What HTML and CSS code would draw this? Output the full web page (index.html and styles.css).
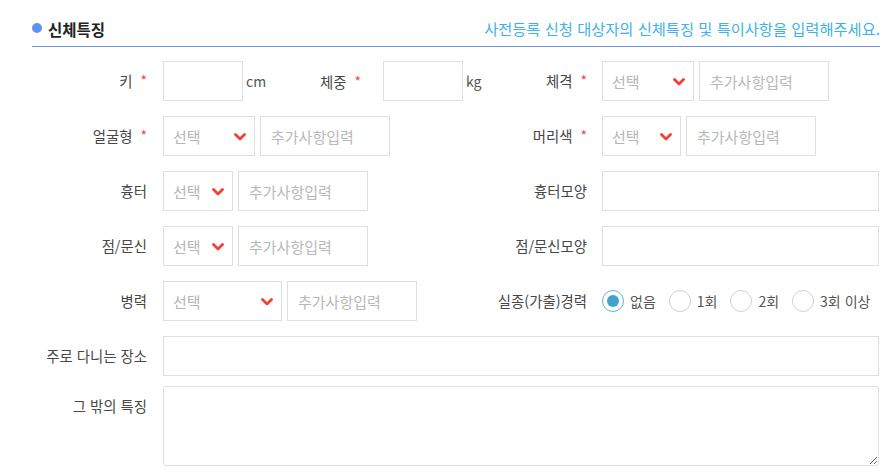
FILE: index.html
```html
<!DOCTYPE html>
<html lang="ko">
<head>
<meta charset="utf-8">
<title>신체특징</title>
<link rel="stylesheet" href="styles.css">
</head>
<body>
<section class="panel">
  <header class="head">
    <span class="dot"></span>
    <h2 class="title">신체특징</h2>
    <p class="info">사전등록 신청 대상자의 신체특징 및 특이사항을 입력해주세요.</p>
  </header>

  <div class="form">
    <div class="row">
      <div class="lab">키<span class="req">*</span></div>
      <div class="cell">
        <input class="inp w80" type="text">
        <span class="unit">cm</span>
        <span class="sublab">체중<span class="req">*</span></span>
        <input class="inp w80" type="text">
        <span class="unit">kg</span>
      </div>
      <div class="lab rlab">체격<span class="req">*</span></div>
      <div class="cell">
        <div class="sel w92"><span>선택</span><svg class="chev" viewBox="0 0 12 8" width="12" height="8"><path d="M1.5 1.5 L6 6 L10.5 1.5" fill="none" stroke="#ef4136" stroke-width="2.8" stroke-linecap="round" stroke-linejoin="round"/></svg></div>
        <input class="inp w130" type="text" placeholder="추가사항입력">
      </div>
    </div>

    <div class="row">
      <div class="lab">얼굴형<span class="req">*</span></div>
      <div class="cell">
        <div class="sel w92"><span>선택</span><svg class="chev" viewBox="0 0 12 8" width="12" height="8"><path d="M1.5 1.5 L6 6 L10.5 1.5" fill="none" stroke="#ef4136" stroke-width="2.8" stroke-linecap="round" stroke-linejoin="round"/></svg></div>
        <input class="inp w130" type="text" placeholder="추가사항입력">
      </div>
      <div class="lab rlab">머리색<span class="req">*</span></div>
      <div class="cell">
        <div class="sel w79"><span>선택</span><svg class="chev" viewBox="0 0 12 8" width="12" height="8"><path d="M1.5 1.5 L6 6 L10.5 1.5" fill="none" stroke="#ef4136" stroke-width="2.8" stroke-linecap="round" stroke-linejoin="round"/></svg></div>
        <input class="inp w130" type="text" placeholder="추가사항입력">
      </div>
    </div>

    <div class="row">
      <div class="lab">흉터</div>
      <div class="cell">
        <div class="sel w70"><span>선택</span><svg class="chev" viewBox="0 0 12 8" width="12" height="8"><path d="M1.5 1.5 L6 6 L10.5 1.5" fill="none" stroke="#ef4136" stroke-width="2.8" stroke-linecap="round" stroke-linejoin="round"/></svg></div>
        <input class="inp w130" type="text" placeholder="추가사항입력">
      </div>
      <div class="lab rlab">흉터모양</div>
      <div class="cell">
        <input class="inp full" type="text">
      </div>
    </div>

    <div class="row">
      <div class="lab">점/문신</div>
      <div class="cell">
        <div class="sel w70"><span>선택</span><svg class="chev" viewBox="0 0 12 8" width="12" height="8"><path d="M1.5 1.5 L6 6 L10.5 1.5" fill="none" stroke="#ef4136" stroke-width="2.8" stroke-linecap="round" stroke-linejoin="round"/></svg></div>
        <input class="inp w130" type="text" placeholder="추가사항입력">
      </div>
      <div class="lab rlab">점/문신모양</div>
      <div class="cell">
        <input class="inp full" type="text">
      </div>
    </div>

    <div class="row">
      <div class="lab">병력</div>
      <div class="cell">
        <div class="sel w119"><span>선택</span><svg class="chev" viewBox="0 0 12 8" width="12" height="8"><path d="M1.5 1.5 L6 6 L10.5 1.5" fill="none" stroke="#ef4136" stroke-width="2.8" stroke-linecap="round" stroke-linejoin="round"/></svg></div>
        <input class="inp w130" type="text" placeholder="추가사항입력">
      </div>
      <div class="lab rlab">실종(가출)경력</div>
      <div class="cell radios">
        <label class="radio"><span class="circ on"></span>없음</label>
        <label class="radio"><span class="circ"></span>1회</label>
        <label class="radio"><span class="circ"></span>2회</label>
        <label class="radio"><span class="circ"></span>3회 이상</label>
      </div>
    </div>

    <div class="row">
      <div class="lab">주로 다니는 장소</div>
      <div class="cell span3">
        <input class="inp full" type="text">
      </div>
    </div>

    <div class="row last">
      <div class="lab top">그 밖의 특징</div>
      <div class="cell span3">
        <textarea class="ta"></textarea>
      </div>
    </div>
  </div>
</section>
</body>
</html>
```

FILE: styles.css
```css
* { box-sizing: border-box; }
html, body { margin: 0; padding: 0; background: #fff; }
body {
  font-family: "Noto Sans CJK KR", "Noto Sans", sans-serif;
  font-size: 14px;
  color: #474747;
  width: 889px;
}
.panel { padding: 0 9px 0 32px; }

.head {
  display: flex;
  align-items: center;
  height: 47px;
  padding-top: 9px;
  border-bottom: 1px solid #6f96e6;
}
.dot {
  width: 10px; height: 10px;
  border-radius: 50%;
  background: #5e91f2;
  margin-right: 6px;
  margin-top: 1px;
}
.title {
  margin: 0;
  font-size: 15.5px;
  font-weight: 700;
  color: #222;
  flex: 1;
  line-height: 20px;
  margin-top: 2px;
}
.info {
  margin: 0;
  font-size: 15.3px;
  color: #3cb2ee;
  line-height: 20px;
  white-space: nowrap;
}

.form {
  display: flex;
  flex-direction: column;
  gap: 15px;
  padding-top: 14px;
}
.row {
  display: grid;
  grid-template-columns: 131px 293px 146px 277px;
  min-height: 40px;
}
.row.last { margin-top: -5px; }

.lab {
  line-height: 40px;
  font-size: 14.4px;
  text-align: right;
  padding-right: 16px;
  white-space: nowrap;
}
.lab.rlab { padding-right: 15px; }
.lab.top { align-self: start; }
.req {
  color: #f2493c;
  margin-left: 8px;
  font-size: 14px;
  position: relative;
  top: -1px;
}

.cell {
  display: flex;
  align-items: center;
  gap: 5px;
}
.cell > * { flex: none; }
.span3 { grid-column: 2 / 5; }

.inp {
  height: 40px;
  border: 1px solid #dcdfe4;
  border-radius: 0;
  padding: 0 10px;
  font: inherit;
  font-size: 15px;
  color: #333;
  background: #fff;
  outline: none;
  margin: 0;
}
.inp::placeholder { color: #b8b8b8; }
.w80 { width: 80px; }
.w130 { width: 130px; }
.cell > .full { width: 100%; flex: 1; }

.unit {
  width: 38px;
  margin-left: -2px;
  color: #555;
  font-size: 14px;
}
.sublab {
  width: 89px;
  text-align: right;
  padding-right: 17px;
  white-space: nowrap;
  font-size: 14.4px;
}

.sel {
  height: 40px;
  border: 1px solid #dcdfe4;
  display: flex;
  align-items: center;
  justify-content: space-between;
  padding: 0 8px 0 9px;
  color: #b5b5b5;
  font-size: 15px;
}
.w70 { width: 70px; }
.w79 { width: 79px; }
.w92 { width: 92px; }
.w119 { width: 119px; }
.chev { display: block; margin-top: 1px; }

.radios { gap: 13px; }
.radio {
  display: flex;
  align-items: center;
  gap: 6px;
  color: #555;
  white-space: nowrap;
  font-size: 14px;
}
.circ {
  width: 22px; height: 22px;
  border-radius: 50%;
  border: 1px solid #cfd2d6;
  background: #fff;
  position: relative;
  flex: none;
}
.circ.on { border-color: #5bb7e0; }
.circ.on::after {
  content: "";
  position: absolute;
  left: 4px; top: 4px;
  width: 12px; height: 12px;
  border-radius: 50%;
  background: #42a3cf;
}

.ta {
  width: 100%;
  height: 80px;
  border: 1px solid #dcdfe4;
  border-radius: 3px;
  font: inherit;
  margin: 0;
  padding: 6px 10px;
  display: block;
  outline: none;
}
```
